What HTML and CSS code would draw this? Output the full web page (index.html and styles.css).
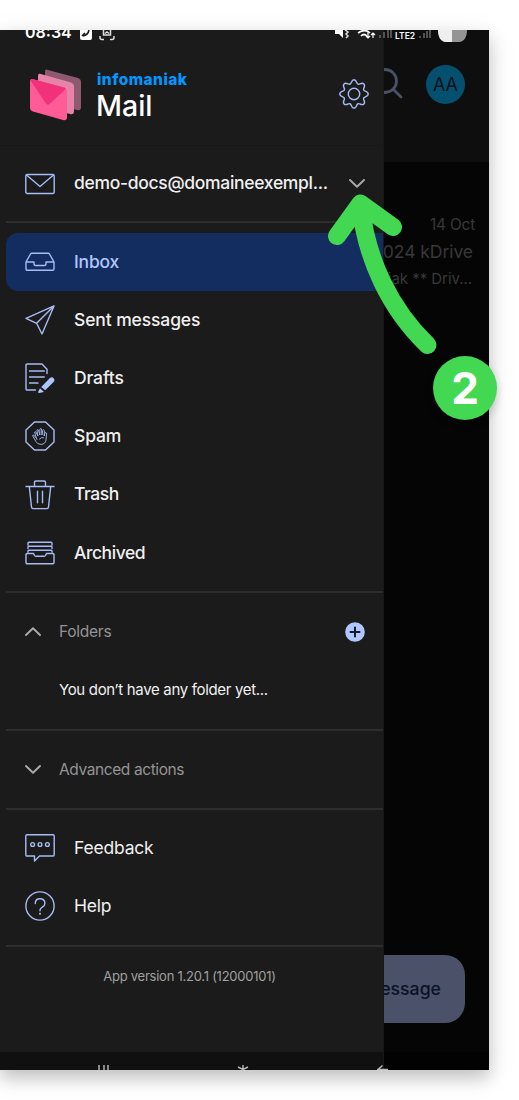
FILE: index.html
```html
<!DOCTYPE html>
<html lang="en">
<head>
<meta charset="utf-8">
<title>infomaniak Mail</title>
<link rel="stylesheet" href="styles.css">
</head>
<body>
<main class="phone">
  <section class="mailbox">
    <header class="mailbox-header">
      <svg class="search" width="34" height="34" viewBox="0 0 34 34"><circle cx="15" cy="13" r="11.500"/><path d="M23 21l8 8"/></svg>
      <span class="avatar">AA</span>
    </header>
    <article class="message">
      <time class="date">14 Oct</time>
      <p class="subject">2024 kDrive</p>
      <p class="preview">infomaniak ** Driv...</p>
    </article>
    <div class="compose">New message</div>
    <div class="nav-shade"></div>
  </section>

  <aside class="drawer">
    <header class="brand">
      <svg class="logo" width="52" height="52" viewBox="0 0 52 52">
        <path d="M17 .7L48 9q3 1 3 4v25q0 4-4 3L18 33q-3-1-3-4V3q0-3 2-2.300Z" fill="#8f5a70"/>
        <path d="M10 4.800L41 13.500q3 1 3 4V42q0 4-4 3L11 37q-3-1-3-4V7q0-3 2-2.200Z" fill="#e583a8"/>
        <path d="M3 10.200L34 18.500q3 1 3 4V48q0 4-4 3L3 42.500q-3-1-3-4V12.500q0-3 3-2.300Z" fill="#ff5b97"/>
        <path d="M2.500 10L35 18.800q1 .7.500 1.400L19.500 35q-2 1.500-3.500-.5L.8 12q0-2 1.700-2Z" fill="#f1327b"/>
      </svg>
      <div class="brand-name"><span class="company">infomaniak</span><span class="product">Mail</span></div>
      <svg class="icon gear" width="30" height="30" viewBox="0 0 30 30"><circle cx="15" cy="15" r="5.700"/><path d="M12.300 3.600C13 1.800 14 .8 15 .8s2 1 2.700 2.800c.6 1.700 1.800 2.100 3.300 1.300 1.800-.9 3.100-.8 3.900 0s.9 2.200 0 4c-.8 1.600-.3 2.700 1.400 3.300 1.900.7 2.900 1.700 2.900 2.800s-1 2.100-2.900 2.800c-1.700.6-2.200 1.800-1.400 3.300.9 1.800.8 3.100 0 3.900s-2.100.9-3.900 0c-1.500-.8-2.700-.3-3.300 1.400-.7 1.900-1.700 2.800-2.700 2.800s-2-.9-2.700-2.800c-.6-1.700-1.800-2.200-3.300-1.400-1.800.9-3.100.8-3.900 0s-.9-2.100 0-3.900c.8-1.500.3-2.700-1.400-3.300C1.800 17.100.8 16.100.8 15s1-2.100 2.900-2.800c1.700-.6 2.200-1.700 1.400-3.300-.9-1.800-.8-3.200 0-4s2.100-.9 3.900 0c1.500.8 2.700.4 3.300-1.300Z"/></svg>
    </header>

    <div class="row account">
      <svg class="icon" width="30" height="30" viewBox="0 0 30 30"><rect x=".8" y="5.500" width="28.400" height="19" rx="1.500"/><path d="M1.500 6L15 17.500 28.500 6"/></svg>
      <span class="label email">demo-docs@domaineexempl...</span>
      <svg class="chevron" width="16" height="9" viewBox="0 0 16 9"><path d="M1 1l7 6.700L15 1"/></svg>
    </div>

    <nav class="folders">
      <div class="row selected">
        <svg class="icon" width="30" height="30" viewBox="0 0 30 30"><path d="M1 15L5.500 7q.4-.7 1.200-.7h16.600q.8 0 1.200.7L29 15v7q0 1.200-1.200 1.200H2.200Q1 23.200 1 22Zh8v2q0 1.500 1.500 1.500h9Q21 18.500 21 17v-2h8" /></svg>
        <span class="label inbox">Inbox</span>
      </div>
      <div class="row">
        <svg class="icon" width="30" height="30" viewBox="0 0 30 30"><path d="M29 .9L1 13.300 11.600 18.300 17 29ZL11.600 18.300"/></svg>
        <span class="label sent">Sent messages</span>
      </div>
      <div class="row">
        <svg class="icon" width="30" height="30" viewBox="0 0 30 30"><path d="M10.500 27H2.200Q1 27 1 25.800V2.200Q1 1 2.200 1H17l5 5.200V10.500M4.500 8h14.800M4.500 14h14.800M4.500 20H13"/><path class="solid" d="M16.200 24L24.700 15.200q2.400-1.800 4.100.2 1.400 1.800-.2 3.700L20.200 27.200ZM15 25.300L19 29l-5 1q-1.200 0-.8-1.200Z"/></svg>
        <span class="label drafts">Drafts</span>
      </div>
      <div class="row">
        <svg class="icon" width="30" height="30" viewBox="0 0 30 30"><path d="M9.500 1h11L29 9v12l-8.500 8h-11L1 21V9Z"/><g class="hand"><path d="M10.500 16.500L8.700 14q-1-.4-1.100.7l3.200 5.700q1.500 3 5.200 3 4.500-.2 5-4.500l.6-6.800q-.8-1.500-1.700 0L19.200 15l.1-5.500q-.9-1.400-1.700 0L17 14l-.4-6q-.9-1.200-1.700 0v6l-1.500-5q-1-1-1.500 0l1 6-2-4q-1-.8-1.400.2l2.400 7.300M14.500 18q1.800-2 4-1.400"/></g></svg>
        <span class="label spam">Spam</span>
      </div>
      <div class="row">
        <svg class="icon" width="30" height="30" viewBox="0 0 30 30"><path d="M1 6.500h28M9.500 6.500V2.200Q9.500 1 10.700 1h8.600q1.200 0 1.200 1.200v4.300M4.300 6.500L6.500 27q.2 1.600 1.700 1.600h13.600q1.500 0 1.700-1.600L25.700 6.500M12.500 11.300v11.500M17.500 11.300v11.500"/></svg>
        <span class="label trash">Trash</span>
      </div>
      <div class="row">
        <svg class="icon" width="30" height="30" viewBox="0 0 30 30"><path d="M3 7V5.200Q3 4.200 4 4.200h22q1 0 1 1V7M3 10.500V9q0-.8.8-.8h22.400q.8 0 .8.800v1.500M3 14v-1q0-.8.8-.8h22.400q.8 0 .8.800v1M2 15.500h6.500l1 2q.4.700 1.200.7h8.600q.8 0 1.200-.7l1-2H28q1 0 1 1v8q0 1.200-1.200 1.200H2.200Q1 25.700 1 24.500v-8q0-1 1-1Z"/></svg>
        <span class="label archived">Archived</span>
      </div>
    </nav>

    <section class="section custom">
      <div class="section-head">
        <svg class="chevron" width="16" height="9" viewBox="0 0 16 9"><path d="M1 8l7-6.700L15 8"/></svg>
        <span class="folders-title">Folders</span>
        <svg class="add" width="20" height="20" viewBox="0 0 20 20"><circle cx="10" cy="10" r="9.800"/><path d="M10 4.700v10.600M4.700 10h10.600"/></svg>
      </div>
      <p class="empty"><span>You don’t have any folder yet...</span></p>
    </section>

    <section class="section advanced">
      <div class="section-head">
        <svg class="chevron" width="16" height="9" viewBox="0 0 16 9"><path d="M1 1l7 6.700L15 1"/></svg>
        <span class="advanced-title">Advanced actions</span>
      </div>
    </section>

    <section class="section support">
      <div class="row">
        <svg class="icon" width="30" height="30" viewBox="0 0 30 30"><path d="M2 1.800h26q1.200 0 1.200 1.200v18.800q0 1.200-1.200 1.200H14.500L9.500 28v-5H2Q.8 23 .8 21.800V3Q.8 1.800 2 1.800Z"/><circle cx="7.600" cy="11.500" r="1.900"/><circle cx="15" cy="11.500" r="1.900"/><circle cx="22.400" cy="11.500" r="1.900"/></svg>
        <span class="label feedback">Feedback</span>
      </div>
      <div class="row">
        <svg class="icon" width="30" height="30" viewBox="0 0 30 30"><circle cx="15" cy="15" r="14.100"/><path d="M10.300 12.500Q10.300 7.800 15 7.800t4.900 4.400q0 2.500-2.600 4T15 19.500v.3"/><circle class="solid dot" cx="15" cy="22.800" r="1"/></svg>
        <span class="label help">Help</span>
      </div>
    </section>

    <p class="version"><span>App version 1.20.1 (12000101)</span></p>
    <div class="nav-shade"></div>
  </aside>

  <div class="status">
    <span class="clock">08:34</span>
    <svg class="status-left" width="40" height="12" viewBox="0 0 40 12"><path d="M1 0h12v8q0 2-2 2H3Q1 10 1 8Z" fill="#fff"/><path d="M4 6q5-1 6-6M3 6l3-3" stroke="#1b1b1b" stroke-width="1.600" fill="none"/><path d="M21 6v1.500q0 2 2 2h2m6 0h2q2 0 2-2V6M24.500 0v5h7V0M26 3.500l2-1.500 2 1.500" stroke="#ddd" stroke-width="1.500" fill="none"/></svg>
    <svg class="status-right" width="136" height="14" viewBox="0 0 136 14"><path d="M0 0h8v8L4 4H0Z" fill="#fff"/><path d="M10 0l3 2-2 2 2 2-2 2" stroke="#ddd" stroke-width="1.500" fill="none"/><path d="M23 3q7-5 12 0M26 6q3-3 6 0" stroke="#fff" stroke-width="1.700" fill="none"/><path d="M33 2v6m-2-2l2 2 2-2m3 2V3m-2 2l2-2 2 2" stroke="#fff" stroke-width="1.200" fill="none"/><g stroke="#686868" stroke-width="1.500"><path d="M45 8V5M49 8V2M53 8V0M56 8V0M85 8V6M89 8V3M92 8V1M95 8V0"/></g><text x="60" y="8.500">LTE2</text><path d="M103 0h29c0 7-3 12-8 12h-13c-5 0-8-5-8-12Z" fill="#949494"/><path d="M103 0h14v12h-6c-5 0-8-5-8-12Z" fill="#eee"/></svg>
  </div>
  <svg class="nav-icons" width="300" height="8" viewBox="0 0 300 8"><path d="M4 1v7M9 1v7M13 1v7M148 1v7M143 3l10 5M153 3l-10 5M287.500 1.500L283 5.500M282 5.500h11"/></svg>
</main>
<svg class="arrow" width="120" height="170" viewBox="0 0 120 170"><path d="M14 46L37.500 13.500 70 37M37.500 14C43 70 68 120 104.500 155"/></svg>
<div class="step">2</div>
</body>
</html>
```
FILE: styles.css
```css
* { box-sizing: border-box; }
body {
  position: relative;
  width: 519px;
  height: 1100px;
  margin: 0;
  padding-top: 30px;
  background: #fff;
  overflow: hidden;
  font-family: Inter, "Liberation Sans", sans-serif;
}
p { margin: 0; }
svg { display: block; flex: none; }
.phone {
  position: relative;
  width: 489px;
  height: 1040px;
  background: #050505;
  overflow: hidden;
}
body::before {
  content: "";
  position: absolute;
  top: 30px;
  left: 0;
  width: 489px;
  height: 1040px;
  box-shadow: 0 8px 16px rgba(0,0,0,.2), 0 6px 30px rgba(0,0,0,.08);
}
.mailbox { display: flex; flex-direction: column; height: 100%; }
.mailbox-header {
  display: flex;
  justify-content: flex-end;
  gap: 22px;
  height: 132px;
  padding: 35px 24px 0 0;
  background: #0e0e0e;
}
.search { margin-top: 3px; fill: none; stroke: #4a5066; stroke-width: 2.8; stroke-linecap: round; }
.avatar {
  display: flex;
  align-items: center;
  justify-content: center;
  width: 39px;
  height: 39px;
  border-radius: 50%;
  background: #05506f;
  color: #071019;
  font-size: 18px;
}
.message { display: flex; flex-direction: column; align-items: flex-end; padding: 52px 14px 0 0; color: #383838; white-space: nowrap; }
.date { font-size: 15.4px; line-height: 22px; letter-spacing: -.2px; }
.subject { margin-right: 1px; font-size: 17.6px; line-height: 31px; letter-spacing: -.45px; }
.preview { margin-right: 3px; font-size: 15px; line-height: 24px; letter-spacing: -.3px; }
.subject { margin-right: 2px; letter-spacing: -.1px; }
.preview { letter-spacing: -.05px; }
.compose {
  display: flex;
  align-items: center;
  justify-content: flex-end;
  align-self: flex-end;
  width: 180px;
  height: 68px;
  margin: auto 24px 29px 0;
  padding: 0 24px 2px 0;
  border-radius: 20px;
  background: #4a5169;
  color: #0a1228;
  font-size: 17.7px;
  font-weight: 500;
}
.nav-shade { height: 18px; background: #020202; }
.drawer {
  position: absolute;
  inset: 0 auto 0 0;
  display: flex;
  flex-direction: column;
  width: 384px;
  background: #1b1b1b;
  border-right: 1px solid #171717;
  color: #f0f0f0;
}
.brand { display: flex; height: 116px; padding: 39px 14px 0 30px; border-bottom: 1px solid #181818; }
.brand-name { display: flex; flex-direction: column; margin: 1px 0 0 15px; }
.company { color: #0098ff; font-size: 15.5px; font-weight: 800; line-height: 19px; letter-spacing: .45px; }
.product { margin-left: -1px; color: #fff; font-size: 28.5px; font-weight: 500; line-height: 33px; letter-spacing: 0; }
.gear { margin: 10px 0 0 auto; }
.icon { fill: none; stroke: #a7bcf5; stroke-width: 1.4; stroke-linejoin: round; stroke-linecap: round; }
.icon .solid { fill: #acc4ff; stroke: none; }
.hand { stroke-width: .9; }
.row { display: flex; align-items: center; gap: 19px; height: 58.15px; padding-left: 19px; }
.label { padding-bottom: 1.5px; font-size: 17.5px; font-weight: 500; letter-spacing: -.12px; white-space: nowrap; }
.account { height: 75px; margin-left: 6px; }
.email { width: 256px; letter-spacing: -.31px; }
.inbox { letter-spacing: -.2px; }
.trash, .archived { letter-spacing: -.45px; }
.chevron { fill: none; stroke: #aaa; stroke-width: 1.9; stroke-linecap: round; stroke-linejoin: round; }
.folders { height: 370px; margin-left: 6px; padding-top: 10px; border-top: 2px solid #2d2d2d; }
.selected { border-radius: 12px 0 0 12px; background: #142d60; color: #b1c5ff; }
.section { margin-left: 6px; border-top: 2px solid #2d2d2d; }
.section-head { display: flex; align-items: center; height: 77px; padding-left: 19px; color: #949494; font-size: 15.5px; }
.section-head > span { margin-left: 18px; letter-spacing: -.25px; }
.section-head > .advanced-title { letter-spacing: -.4px; }
.custom { height: 138px; }
.add { margin: 0 18.5px 0 auto; fill: #b1c5ff; stroke: #151b2b; stroke-width: 2; }
.add circle { stroke: none; }
.empty { padding: 1px 0 0 53px; color: #f0f0f0; font-size: 15px; line-height: 38px; letter-spacing: -.33px; white-space: nowrap; }
.advanced { height: 79px; }
.support { height: 137px; padding-top: 9px; }
.support .label { padding-bottom: 1px; font-weight: 400; letter-spacing: -.2px; }
.version { flex: 1; margin-left: 6px; padding: 19px 10px 0 0; border-top: 2px solid #2d2d2d; color: #a0a0a0; font-size: 13px; line-height: 20px; letter-spacing: -.25px; text-align: center; }
.drawer .nav-shade { background: #101010; }
.status { position: absolute; inset: 0 0 auto 0; height: 14px; overflow: hidden; }
.clock { position: absolute; left: 25px; top: -8px; color: #fff; font-size: 16px; font-weight: 600; line-height: 20px; }
.status-left { position: absolute; left: 79px; top: 0; }
.status-right { position: absolute; left: 335px; top: 0; }
.status-right text { fill: #fff; font: 600 8.5px Inter, sans-serif; }
.nav-icons { position: absolute; left: 95px; bottom: -2px; fill: none; stroke: #bbb; stroke-width: 1.4; }
.arrow { position: absolute; left: 323px; top: 190px; fill: none; stroke: #42d852; stroke-width: 18; stroke-linecap: round; stroke-linejoin: round; }
.step {
  position: absolute;
  left: 433px;
  top: 356px;
  display: flex;
  align-items: center;
  justify-content: center;
  width: 64px;
  height: 64px;
  border-radius: 50%;
  background: #42d852;
  box-shadow: 0 4px 8px rgba(0,0,0,.18);
  color: #fff;
  font-size: 44px;
  font-weight: 700;
}
```
